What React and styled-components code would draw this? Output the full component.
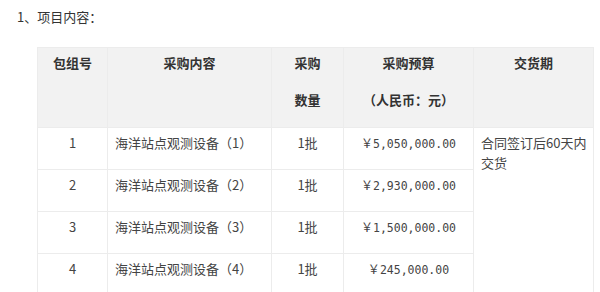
import React from "react";
import styled, { createGlobalStyle } from "styled-components";

const GlobalStyle = createGlobalStyle`
  body {
    margin: 0;
    background: #fff;
    font-family: "Noto Sans CJK SC", "Liberation Sans", sans-serif;
    color: #333;
  }
`;

const rows = [
  { no: "1", name: "海洋站点观测设备（1）", qty: "1批", budget: "5,050,000.00" },
  { no: "2", name: "海洋站点观测设备（2）", qty: "1批", budget: "2,930,000.00" },
  { no: "3", name: "海洋站点观测设备（3）", qty: "1批", budget: "1,500,000.00" },
  { no: "4", name: "海洋站点观测设备（4）", qty: "1批", budget: "245,000.00" },
];

const App = () => {
  return (
    <Page>
      <GlobalStyle />
      <Title>1、项目内容：</Title>
      <Table>
        <colgroup>
          <col width="70" />
          <col width="164" />
          <col width="72" />
          <col width="130" />
          <col width="120" />
        </colgroup>
        <thead>
          <HeadRow>
            <Th>包组号</Th>
            <Th>采购内容</Th>
            <Th>
              <Line>采购</Line>
              <Line>数量</Line>
            </Th>
            <Th>
              <Line>采购预算</Line>
              <Line>（人民币：元）</Line>
            </Th>
            <Th>交货期</Th>
          </HeadRow>
        </thead>
        <tbody>
          {rows.map((row, i) => (
            <BodyRow key={row.no}>
              <Td>{row.no}</Td>
              <Td align="left">{row.name}</Td>
              <Td>{row.qty}</Td>
              <Td>
                <Money>
                  <Yen>￥</Yen>
                  {row.budget}
                </Money>
              </Td>
              {i === 0 ? (
                <DeliveryCell rowSpan={rows.length}>
                  合同签订后60天内交货
                </DeliveryCell>
              ) : null}
            </BodyRow>
          ))}
        </tbody>
      </Table>
    </Page>
  );
};

const Page = styled.div`
  padding: 7px 0 0 17px;
  height: 292px;
  overflow: hidden;
  box-sizing: border-box;
`;

const Title = styled.div`
  font-size: 13px;
  line-height: 20px;
  color: #333;
`;

const Table = styled.table`
  margin: 20px 0 0 20px;
  width: 556px;
  border-collapse: collapse;
  table-layout: fixed;
  font-size: 13px;
`;

const HeadRow = styled.tr`
  height: 80px;
  background: #f2f2f2;
`;

const Th = styled.th`
  border: 1px solid #ececec;
  padding: 5px 8px;
  vertical-align: top;
  text-align: center;
  font-weight: bold;
  line-height: 20px;
  color: #333;
`;

const Line = styled.div`
  & + & {
    margin-top: 17px;
  }
`;

const BodyRow = styled.tr`
  height: 42px;
`;

const Td = styled.td`
  border: 1px solid #ececec;
  padding: 5px 7px;
  vertical-align: top;
  text-align: ${({ align }) => align || "center"};
  line-height: 20px;
  color: #444;
`;

const DeliveryCell = styled(Td)`
  text-align: left;
  padding: 5px 1px 5px 7px;
`;

const Money = styled.span`
  font-family: "DejaVu Sans Mono", "Liberation Mono", monospace;
  font-size: 11.5px;
`;

const Yen = styled.span`
  font-family: "Noto Sans CJK SC", sans-serif;
  font-size: 12px;
`;

export default App;
